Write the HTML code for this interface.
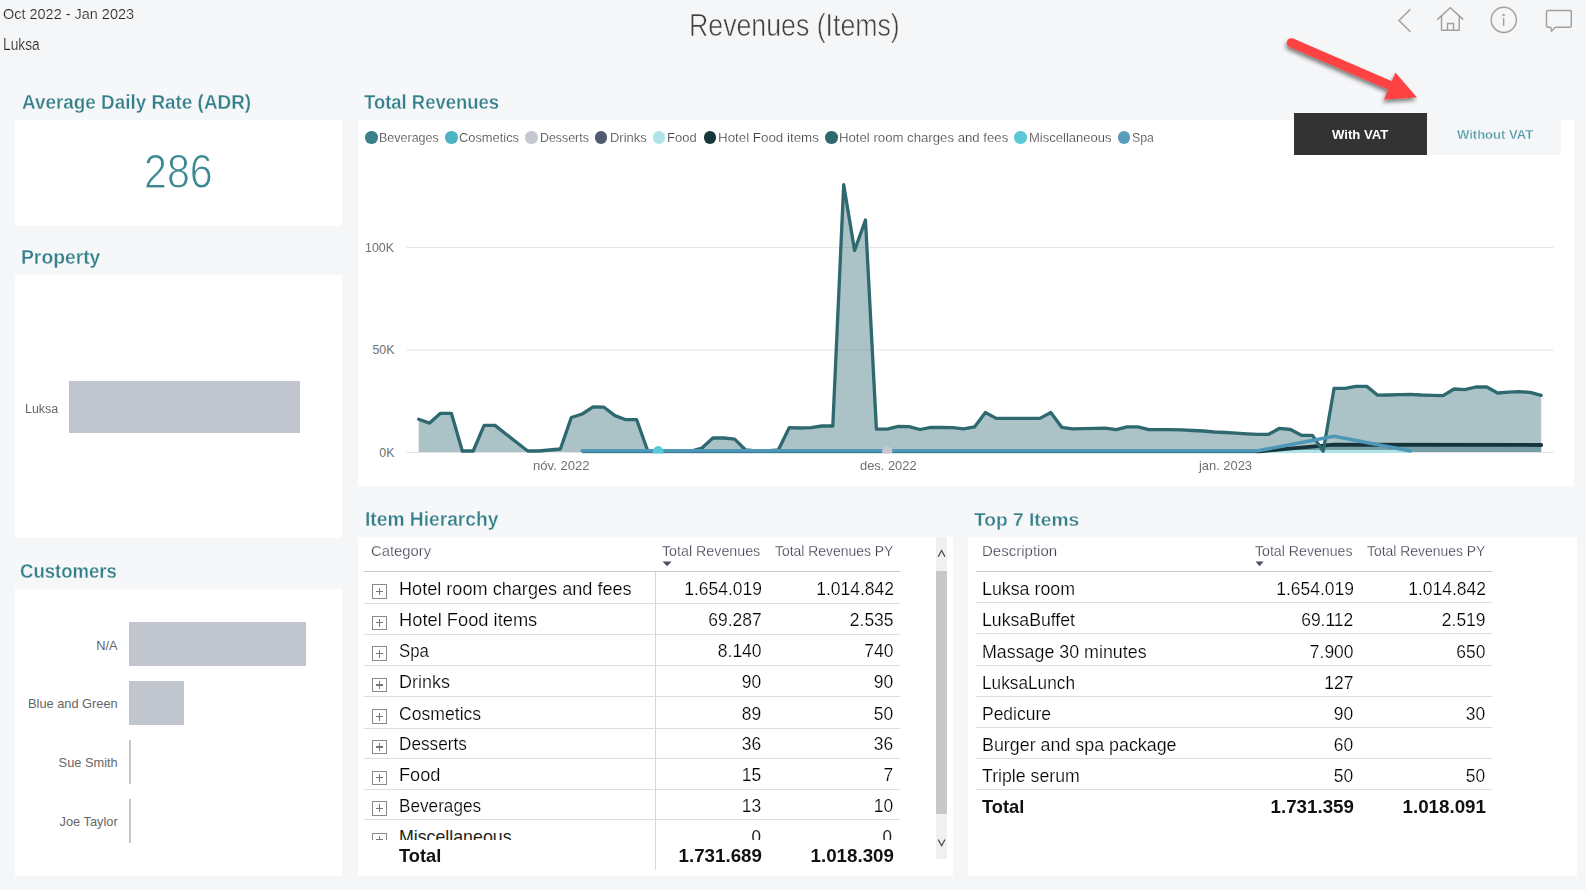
<!DOCTYPE html>
<html><head><meta charset="utf-8"><style>
*{margin:0;padding:0;box-sizing:border-box}
html,body{width:1586px;height:890px;overflow:hidden;background:#f5f6f8;font-family:"Liberation Sans", sans-serif;}
.a{position:absolute;white-space:nowrap}
.card{position:absolute;background:#fff}
.hdr{position:absolute;background:#f6f7f9}
.dot{position:absolute;width:12.5px;height:12.5px;border-radius:50%;top:131.2px}
.hl{position:absolute;height:1px;background:#dcdde2}
.pb{position:absolute;width:14.5px;height:14.5px;border:1.3px solid #8a8a8a;background:#fff}
.pb:before{content:"";position:absolute;left:2.6px;top:5.8px;width:7.5px;height:1.1px;background:#777}
.pb:after{content:"";position:absolute;left:5.8px;top:2.4px;width:1.1px;height:7.8px;background:#777}
.bar{position:absolute;background:#c1c5ce}
</style></head><body>

<!-- top icons -->
<svg class="a" style="left:1390px;top:0" width="196" height="40" viewBox="1390 0 196 40" fill="none" stroke="#a0a0a0" stroke-width="1.45">
<polyline points="1410.4,9.3 1399,20.4 1410.4,31.7"/>
<polyline points="1437.3,19.6 1450.3,7.8 1463.3,19.6"/>
<polyline points="1441.5,15.8 1441.5,30.2 1459.2,30.2 1459.2,15.8" stroke-linejoin="round"/>
<polyline points="1447.5,30.2 1447.5,23.4 1453.5,23.4 1453.5,30.2"/>
<circle cx="1503.8" cy="19.8" r="12.6"/>
<line x1="1503.6" y1="18" x2="1503.6" y2="26"/>
<circle cx="1503.6" cy="15" r="0.5" fill="#a0a0a0"/>
<path d="M1548,10.5 H1570 Q1571.3,10.5 1571.3,12 V25.8 Q1571.3,27.3 1570,27.3 H1555.3 L1551.5,31.2 L1550.8,27.3 H1548 Q1546.5,27.3 1546.5,25.8 V12 Q1546.5,10.5 1548,10.5 Z" stroke-linejoin="round"/>
</svg>

<!-- ADR card -->
<div class="hdr" style="left:15px;top:87px;width:327px;height:33px"></div>
<div class="card" style="left:15px;top:120px;width:327px;height:106px"></div>

<!-- Property card -->
<div class="hdr" style="left:14.5px;top:242px;width:327.5px;height:33px"></div>
<div class="card" style="left:15px;top:275px;width:327px;height:262.5px"></div>
<div class="bar" style="left:69.2px;top:380.8px;width:231.1px;height:52.1px"></div>

<!-- Customers card -->
<div class="hdr" style="left:15px;top:555px;width:327px;height:34px"></div>
<div class="card" style="left:15px;top:589px;width:327px;height:286.5px"></div>
<div class="bar" style="left:128.9px;top:621.8px;width:177.5px;height:44.5px"></div>
<div class="bar" style="left:128.9px;top:680.9px;width:55.3px;height:44.1px"></div>
<div class="bar" style="left:128.9px;top:739.5px;width:2.2px;height:44.5px"></div>
<div class="bar" style="left:128.9px;top:798.5px;width:2.2px;height:44.1px"></div>

<!-- Total revenues card -->
<div class="hdr" style="left:358px;top:87px;width:1216px;height:33px"></div>
<div class="card" style="left:358px;top:120px;width:1216px;height:366px"></div>
<div class="dot" style="left:365.0px;background:#3a7f8a"></div>
<div class="dot" style="left:445.4px;background:#4ab3c4"></div>
<div class="dot" style="left:525.4px;background:#c5c8d0"></div>
<div class="dot" style="left:594.9px;background:#4f5a6e"></div>
<div class="dot" style="left:652.9px;background:#aee3e8"></div>
<div class="dot" style="left:703.9px;background:#16363b"></div>
<div class="dot" style="left:825.0px;background:#2e6970"></div>
<div class="dot" style="left:1014.0px;background:#5bc8d5"></div>
<div class="dot" style="left:1117.9px;background:#5a9cbc"></div>

<svg class="a" style="left:0;top:0" width="1586" height="890" viewBox="0 0 1586 890">
<g stroke="#e4e4e4" stroke-width="1">
<line x1="406.5" y1="247.5" x2="1553.5" y2="247.5"/>
<line x1="406.5" y1="350" x2="1553.5" y2="350"/>
<line x1="406.5" y1="452.5" x2="1553.5" y2="452.5"/>
</g>
<path d="M418.7,452.0 L418.7,419.3 429.6,423.1 440.5,413.3 451.4,413.3 462.3,451.0 473.2,451.0 484.1,425.4 495.0,425.4 505.9,434.0 516.8,442.5 527.7,451.0 538.6,451.0 549.5,450.0 560.4,449.0 571.3,417.5 582.2,414.0 593.1,406.9 604.0,407.2 614.9,415.6 625.8,419.7 636.7,419.7 647.6,450.5 658.5,451.0 669.4,451.0 680.3,451.0 691.1,451.0 702.0,448.0 712.9,438.0 723.8,438.0 734.7,439.2 745.6,450.0 756.5,451.0 767.4,451.0 778.3,450.0 789.2,427.7 800.1,428.0 811.0,427.7 821.9,426.0 832.8,426.0 843.7,184.7 854.6,250.4 865.5,220.0 876.4,429.2 887.3,429.2 898.2,426.3 909.1,426.7 920.0,429.5 930.9,427.3 941.8,427.5 952.7,427.7 963.6,428.8 974.5,426.9 985.4,412.5 996.3,418.4 1007.2,418.4 1018.1,418.4 1029.0,418.4 1039.9,418.4 1050.8,412.5 1061.7,427.3 1072.6,428.8 1083.5,428.6 1094.4,428.4 1105.3,428.2 1116.2,429.7 1127.1,426.9 1138.0,426.9 1148.9,429.6 1159.8,429.6 1170.7,429.6 1181.6,429.8 1192.5,430.5 1203.4,431.0 1214.3,432.0 1225.2,432.5 1236.0,433.2 1246.9,433.8 1257.8,434.3 1268.7,434.3 1279.6,428.3 1290.5,429.5 1301.4,435.3 1312.3,435.3 1323.2,451.2 1334.1,388.3 1345.0,388.3 1355.9,386.4 1366.8,386.4 1377.7,395.2 1388.6,395.0 1399.5,394.6 1410.4,394.4 1421.3,395.0 1432.2,395.3 1443.1,395.7 1454.0,389.0 1464.9,389.7 1475.8,387.0 1486.7,387.0 1497.6,393.0 1508.5,392.1 1519.4,391.7 1530.3,392.4 1541.2,395.3 L1541.2,452.0 Z" fill="#2e6970" fill-opacity="0.4"/>
<path d="M1257.8,452.0 L1257.8,451.5 1334.1,444.6 1541.2,445 L1541.2,452.0 Z" fill="#1f6478" fill-opacity="0.38"/>
<polyline points="1257.8,451.6 1410.4,451.6" fill="none" stroke="#aee3e8" stroke-width="3"/>
<polyline points="582.2,452.3 1257.8,452.3" fill="none" stroke="#1f5a68" stroke-width="2"/>
<polyline points="1257.8,451.5 1334.1,444.6 1541.2,445" fill="none" stroke="#15353a" stroke-width="3.8" stroke-linejoin="round" stroke-linecap="round"/>
<polyline points="418.7,419.3 429.6,423.1 440.5,413.3 451.4,413.3 462.3,451.0 473.2,451.0 484.1,425.4 495.0,425.4 505.9,434.0 516.8,442.5 527.7,451.0 538.6,451.0 549.5,450.0 560.4,449.0 571.3,417.5 582.2,414.0 593.1,406.9 604.0,407.2 614.9,415.6 625.8,419.7 636.7,419.7 647.6,450.5 658.5,451.0 669.4,451.0 680.3,451.0 691.1,451.0 702.0,448.0 712.9,438.0 723.8,438.0 734.7,439.2 745.6,450.0 756.5,451.0 767.4,451.0 778.3,450.0 789.2,427.7 800.1,428.0 811.0,427.7 821.9,426.0 832.8,426.0 843.7,184.7 854.6,250.4 865.5,220.0 876.4,429.2 887.3,429.2 898.2,426.3 909.1,426.7 920.0,429.5 930.9,427.3 941.8,427.5 952.7,427.7 963.6,428.8 974.5,426.9 985.4,412.5 996.3,418.4 1007.2,418.4 1018.1,418.4 1029.0,418.4 1039.9,418.4 1050.8,412.5 1061.7,427.3 1072.6,428.8 1083.5,428.6 1094.4,428.4 1105.3,428.2 1116.2,429.7 1127.1,426.9 1138.0,426.9 1148.9,429.6 1159.8,429.6 1170.7,429.6 1181.6,429.8 1192.5,430.5 1203.4,431.0 1214.3,432.0 1225.2,432.5 1236.0,433.2 1246.9,433.8 1257.8,434.3 1268.7,434.3 1279.6,428.3 1290.5,429.5 1301.4,435.3 1312.3,435.3 1323.2,451.2 1334.1,388.3 1345.0,388.3 1355.9,386.4 1366.8,386.4 1377.7,395.2 1388.6,395.0 1399.5,394.6 1410.4,394.4 1421.3,395.0 1432.2,395.3 1443.1,395.7 1454.0,389.0 1464.9,389.7 1475.8,387.0 1486.7,387.0 1497.6,393.0 1508.5,392.1 1519.4,391.7 1530.3,392.4 1541.2,395.3" fill="none" stroke="#2e6970" stroke-width="3.3" stroke-linejoin="round" stroke-linecap="round"/>
<polyline points="582.2,450.8 1257.8,450.8 1334.1,436.3 1410.4,451" fill="none" stroke="#4e97b8" stroke-width="3.6" stroke-linejoin="round" stroke-linecap="round"/>
<circle cx="658.2" cy="451.5" r="5.4" fill="#5bc8d5"/>
<circle cx="887.2" cy="451.5" r="5.2" fill="#c5c8d0"/>
<rect x="358" y="453.6" width="1216" height="10" fill="#fff"/>
</svg>

<!-- VAT buttons -->
<div class="a" style="left:1294px;top:113px;width:133px;height:41.5px;background:#333"></div>
<div class="a" style="left:1427px;top:113px;width:134px;height:41.5px;background:#f5f6f8"></div>

<!-- arrow -->
<svg class="a" style="left:1260px;top:20px" width="180" height="100" viewBox="1260 20 180 100">
<defs><filter id="sh" x="-20%" y="-20%" width="140%" height="160%"><feGaussianBlur in="SourceAlpha" stdDeviation="2"/><feOffset dx="-1.5" dy="3"/><feComponentTransfer><feFuncA type="linear" slope="0.5"/></feComponentTransfer><feMerge><feMergeNode/><feMergeNode in="SourceGraphic"/></feMerge></filter></defs>
<g filter="url(#sh)">
<line x1="1291.3" y1="42.8" x2="1396" y2="88" stroke="#fc4343" stroke-width="9.2" stroke-linecap="round"/>
<polygon points="1384,99.5 1395.4,72.5 1417,97.6" fill="#fc4343"/>
</g>
</svg>

<!-- Item hierarchy card -->
<div class="hdr" style="left:358px;top:504px;width:595px;height:33px"></div>
<div class="card" style="left:358px;top:537px;width:595px;height:338.5px"></div>
<svg class="a" style="left:662px;top:561px" width="12" height="7"><polygon points="0.6,0.6 9.6,0.6 5.1,5.3" fill="#4a5060"/></svg>
<div class="hl" style="left:364px;top:571px;width:536px;background:#c8cad1"></div>
<div class="a" style="left:655px;top:571.5px;width:1px;height:298.5px;background:#d6d7dc"></div>
<div class="pb" style="left:372px;top:584.2px"></div><div class="hl" style="left:364px;top:602.5px;width:536px"></div>
<div class="pb" style="left:372px;top:615.5px"></div><div class="hl" style="left:364px;top:633.8px;width:536px"></div>
<div class="pb" style="left:372px;top:646.4px"></div><div class="hl" style="left:364px;top:664.7px;width:536px"></div>
<div class="pb" style="left:372px;top:677.7px"></div><div class="hl" style="left:364px;top:696.0px;width:536px"></div>
<div class="pb" style="left:372px;top:709.4px"></div><div class="hl" style="left:364px;top:727.7px;width:536px"></div>
<div class="pb" style="left:372px;top:739.7px"></div><div class="hl" style="left:364px;top:758.0px;width:536px"></div>
<div class="pb" style="left:372px;top:770.5px"></div><div class="hl" style="left:364px;top:788.8px;width:536px"></div>
<div class="pb" style="left:372px;top:801.1px"></div><div class="hl" style="left:364px;top:819.4px;width:536px"></div>

<div class="a" style="left:358px;top:820px;width:576px;height:19.5px;overflow:hidden">
<div class="pb" style="left:14px;top:12.5px"></div>
<div class="a" style="left:40.9px;top:8.83px;font-size:17.8px;line-height:17.8px;color:#201f1e">Miscellaneous</div>
<div class="a" style="right:173.60px;top:8.83px;font-size:17.8px;line-height:17.8px;color:#201f1e;transform:scaleX(0.96);transform-origin:100% 0">0</div>
<div class="a" style="right:41.80px;top:8.83px;font-size:17.8px;line-height:17.8px;color:#201f1e;transform:scaleX(0.96);transform-origin:100% 0">0</div>
</div>
<!-- scrollbar -->
<div class="a" style="left:936.2px;top:537px;width:10.5px;height:321.5px;background:#f0f0f0"></div>
<div class="a" style="left:936.2px;top:571.4px;width:10.5px;height:242.5px;background:#c8c8c8"></div>
<svg class="a" style="left:936px;top:549px" width="11" height="10"><polyline points="2.2,7.7 5.6,1.4 9,7.7" fill="none" stroke="#444" stroke-width="1.2"/></svg>
<svg class="a" style="left:936px;top:838px" width="11" height="10"><polyline points="2.2,1.5 5.6,7.8 9,1.5" fill="none" stroke="#444" stroke-width="1.2"/></svg>

<!-- Top 7 card -->
<div class="hdr" style="left:968px;top:504px;width:609px;height:33px"></div>
<div class="card" style="left:968px;top:537px;width:609px;height:338.5px"></div>
<svg class="a" style="left:1255px;top:561px" width="12" height="7"><polygon points="0.6,0.6 8.6,0.6 4.6,5.3" fill="#4a5060"/></svg>
<div class="hl" style="left:976px;top:571px;width:516px;background:#c8cad1"></div>
<div class="hl" style="left:976px;top:602.1px;width:516px"></div>
<div class="hl" style="left:976px;top:633.0px;width:516px"></div>
<div class="hl" style="left:976px;top:664.6px;width:516px"></div>
<div class="hl" style="left:976px;top:695.8px;width:516px"></div>
<div class="hl" style="left:976px;top:726.8px;width:516px"></div>
<div class="hl" style="left:976px;top:758.1px;width:516px"></div>
<div class="hl" style="left:976px;top:789.0px;width:516px"></div>

<div class="a" style="left:2.99px;transform-origin:0 0;top:6.08px;font-size:15.14px;line-height:15.14px;font-weight:normal;color:#252423;transform:scaleX(0.9559);-webkit-text-stroke:0.2px #f5f6f8;">Oct 2022 - Jan 2023</div>
<div class="a" style="left:3.02px;transform-origin:0 0;top:35.93px;font-size:16.39px;line-height:16.39px;font-weight:normal;color:#252423;transform:scaleX(0.8412);-webkit-text-stroke:0.2px #f5f6f8;">Luksa</div>
<div class="a" style="left:688.56px;transform-origin:0 0;top:9.61px;font-size:31.53px;line-height:31.53px;font-weight:normal;color:#404040;transform:scaleX(0.8474);-webkit-text-stroke:0.6px #f5f6f8;">Revenues (Items)</div>
<div class="a" style="left:21.94px;transform-origin:0 0;top:93.09px;font-size:19.86px;line-height:19.86px;font-weight:bold;color:#34808a;transform:scaleX(0.9508);-webkit-text-stroke:0.3px #f6f7f9;">Average Daily Rate (ADR)</div>
<div class="a" style="left:144.46px;transform-origin:0 0;top:148.19px;font-size:47.5px;line-height:47.5px;font-weight:normal;color:#3a8892;transform:scaleX(0.8678);-webkit-text-stroke:1.0px #fff;">286</div>
<div class="a" style="left:20.52px;transform-origin:0 0;top:247.13px;font-size:20.28px;line-height:20.28px;font-weight:bold;color:#34808a;transform:scaleX(0.9521);-webkit-text-stroke:0.3px #f6f7f9;">Property</div>
<div class="a" style="left:20.15px;transform-origin:0 0;top:561.27px;font-size:20.0px;line-height:20.0px;font-weight:bold;color:#34808a;transform:scaleX(0.9274);-webkit-text-stroke:0.3px #f6f7f9;">Customers</div>
<div class="a" style="left:364.25px;transform-origin:0 0;top:93.24px;font-size:19.44px;line-height:19.44px;font-weight:bold;color:#34808a;transform:scaleX(0.9491);-webkit-text-stroke:0.3px #f6f7f9;">Total Revenues</div>
<div class="a" style="left:364.53px;transform-origin:0 0;top:509.53px;font-size:19.58px;line-height:19.58px;font-weight:bold;color:#34808a;transform:scaleX(0.9810);-webkit-text-stroke:0.3px #f6f7f9;">Item Hierarchy</div>
<div class="a" style="left:974.13px;transform-origin:0 0;top:509.99px;font-size:19.03px;line-height:19.03px;font-weight:bold;color:#34808a;transform:scaleX(1.0084);-webkit-text-stroke:0.3px #f6f7f9;">Top 7 Items</div>
<div class="a" style="left:379.36px;transform-origin:0 0;top:130.88px;font-size:13.61px;line-height:13.61px;font-weight:normal;color:#444;transform:scaleX(0.9185);-webkit-text-stroke:0.2px #fff;">Beverages</div>
<div class="a" style="left:459.35px;transform-origin:0 0;top:130.88px;font-size:13.61px;line-height:13.61px;font-weight:normal;color:#444;transform:scaleX(0.9444);-webkit-text-stroke:0.2px #fff;">Cosmetics</div>
<div class="a" style="left:540.17px;transform-origin:0 0;top:130.88px;font-size:13.61px;line-height:13.61px;font-weight:normal;color:#444;transform:scaleX(0.9099);-webkit-text-stroke:0.2px #fff;">Desserts</div>
<div class="a" style="left:609.85px;transform-origin:0 0;top:130.88px;font-size:13.61px;line-height:13.61px;font-weight:normal;color:#444;transform:scaleX(0.9519);-webkit-text-stroke:0.2px #fff;">Drinks</div>
<div class="a" style="left:667.35px;transform-origin:0 0;top:130.88px;font-size:13.61px;line-height:13.61px;font-weight:normal;color:#444;transform:scaleX(0.9542);-webkit-text-stroke:0.2px #fff;">Food</div>
<div class="a" style="left:717.93px;transform-origin:0 0;top:130.88px;font-size:13.61px;line-height:13.61px;font-weight:normal;color:#444;transform:scaleX(0.9802);-webkit-text-stroke:0.2px #fff;">Hotel Food items</div>
<div class="a" style="left:839.24px;transform-origin:0 0;top:130.88px;font-size:13.61px;line-height:13.61px;font-weight:normal;color:#444;transform:scaleX(0.9684);-webkit-text-stroke:0.2px #fff;">Hotel room charges and fees</div>
<div class="a" style="left:1029.04px;transform-origin:0 0;top:130.88px;font-size:13.61px;line-height:13.61px;font-weight:normal;color:#444;transform:scaleX(0.9567);-webkit-text-stroke:0.2px #fff;">Miscellaneous</div>
<div class="a" style="left:1131.57px;transform-origin:0 0;top:130.88px;font-size:13.61px;line-height:13.61px;font-weight:normal;color:#444;transform:scaleX(0.9069);-webkit-text-stroke:0.2px #fff;">Spa</div>
<div class="a" style="left:365.47px;transform-origin:0 0;top:241.94px;font-size:12.36px;line-height:12.36px;font-weight:normal;color:#707070;transform:scaleX(1.0050);">100K</div>
<div class="a" style="right:1191.52px;transform-origin:100% 0;top:343.90px;font-size:12.4px;line-height:12.4px;font-weight:normal;color:#707070;transform:scaleX(1.0000);">50K</div>
<div class="a" style="right:1191.52px;transform-origin:100% 0;top:446.90px;font-size:12.4px;line-height:12.4px;font-weight:normal;color:#707070;transform:scaleX(1.0000);">0K</div>
<div class="a" style="left:532.94px;transform-origin:0 0;top:460.24px;font-size:12.36px;line-height:12.36px;font-weight:normal;color:#707070;transform:scaleX(1.0608);">nóv. 2022</div>
<div class="a" style="left:860.05px;transform-origin:0 0;top:460.20px;font-size:12.4px;line-height:12.4px;font-weight:normal;color:#707070;transform:scaleX(1.0400);">des. 2022</div>
<div class="a" style="left:1199.15px;transform-origin:0 0;top:460.20px;font-size:12.4px;line-height:12.4px;font-weight:normal;color:#707070;transform:scaleX(1.0400);">jan. 2023</div>
<div class="a" style="left:24.76px;transform-origin:0 0;top:402.82px;font-size:12.5px;line-height:12.5px;font-weight:normal;color:#666;transform:scaleX(0.9974);">Luksa</div>
<div class="a" style="right:1468.35px;transform-origin:100% 0;top:640.16px;font-size:12.8px;line-height:12.8px;font-weight:normal;color:#666;transform:scaleX(1.0000);">N/A</div>
<div class="a" style="right:1468.35px;transform-origin:100% 0;top:698.06px;font-size:12.8px;line-height:12.8px;font-weight:normal;color:#666;transform:scaleX(1.0000);">Blue and Green</div>
<div class="a" style="right:1468.35px;transform-origin:100% 0;top:756.86px;font-size:12.8px;line-height:12.8px;font-weight:normal;color:#666;transform:scaleX(1.0000);">Sue Smith</div>
<div class="a" style="right:1468.35px;transform-origin:100% 0;top:815.66px;font-size:12.8px;line-height:12.8px;font-weight:normal;color:#666;transform:scaleX(1.0000);">Joe Taylor</div>
<div class="a" style="left:1332.24px;transform-origin:0 0;top:129.36px;font-size:12.92px;line-height:12.92px;font-weight:bold;color:#fff;transform:scaleX(1.0179);">With VAT</div>
<div class="a" style="left:1456.84px;transform-origin:0 0;top:129.36px;font-size:12.92px;line-height:12.92px;font-weight:bold;color:#4a9aa4;transform:scaleX(1.0096);-webkit-text-stroke:0.3px #f5f6f8;">Without VAT</div>
<div class="a" style="left:370.78px;transform-origin:0 0;top:543.08px;font-size:15.14px;line-height:15.14px;font-weight:normal;color:#3c4250;transform:scaleX(0.9782);-webkit-text-stroke:0.25px #fff;">Category</div>
<div class="a" style="left:662.40px;transform-origin:0 0;top:543.20px;font-size:15.0px;line-height:15.0px;font-weight:normal;color:#3c4250;transform:scaleX(0.9496);-webkit-text-stroke:0.25px #fff;">Total Revenues</div>
<div class="a" style="left:774.71px;transform-origin:0 0;top:543.20px;font-size:15.0px;line-height:15.0px;font-weight:normal;color:#3c4250;transform:scaleX(0.9279);-webkit-text-stroke:0.25px #fff;">Total Revenues PY</div>
<div class="a" style="left:982.07px;transform-origin:0 0;top:543.08px;font-size:15.14px;line-height:15.14px;font-weight:normal;color:#3c4250;transform:scaleX(0.9933);-webkit-text-stroke:0.25px #fff;">Description</div>
<div class="a" style="left:1255.31px;transform-origin:0 0;top:543.20px;font-size:15.0px;line-height:15.0px;font-weight:normal;color:#3c4250;transform:scaleX(0.9428);-webkit-text-stroke:0.25px #fff;">Total Revenues</div>
<div class="a" style="left:1366.91px;transform-origin:0 0;top:543.20px;font-size:15.0px;line-height:15.0px;font-weight:normal;color:#3c4250;transform:scaleX(0.9279);-webkit-text-stroke:0.25px #fff;">Total Revenues PY</div>
<div class="a" style="left:399.37px;transform-origin:0 0;top:579.89px;font-size:18.2px;line-height:18.2px;font-weight:normal;color:#000;transform:scaleX(0.9962);-webkit-text-stroke:0.22px #fff;">Hotel room charges and fees</div>
<div class="a" style="right:824.39px;transform-origin:100% 0;top:579.89px;font-size:18.2px;line-height:18.2px;font-weight:normal;color:#000;transform:scaleX(0.9600);-webkit-text-stroke:0.22px #fff;">1.654.019</div>
<div class="a" style="right:692.59px;transform-origin:100% 0;top:579.89px;font-size:18.2px;line-height:18.2px;font-weight:normal;color:#000;transform:scaleX(0.9600);-webkit-text-stroke:0.22px #fff;">1.014.842</div>
<div class="a" style="left:399.36px;transform-origin:0 0;top:611.19px;font-size:18.2px;line-height:18.2px;font-weight:normal;color:#000;transform:scaleX(1.0058);-webkit-text-stroke:0.22px #fff;">Hotel Food items</div>
<div class="a" style="right:824.39px;transform-origin:100% 0;top:611.19px;font-size:18.2px;line-height:18.2px;font-weight:normal;color:#000;transform:scaleX(0.9600);-webkit-text-stroke:0.22px #fff;">69.287</div>
<div class="a" style="right:692.59px;transform-origin:100% 0;top:611.19px;font-size:18.2px;line-height:18.2px;font-weight:normal;color:#000;transform:scaleX(0.9600);-webkit-text-stroke:0.22px #fff;">2.535</div>
<div class="a" style="left:399.41px;transform-origin:0 0;top:642.09px;font-size:18.2px;line-height:18.2px;font-weight:normal;color:#000;transform:scaleX(0.9228);-webkit-text-stroke:0.22px #fff;">Spa</div>
<div class="a" style="right:824.39px;transform-origin:100% 0;top:642.09px;font-size:18.2px;line-height:18.2px;font-weight:normal;color:#000;transform:scaleX(0.9600);-webkit-text-stroke:0.22px #fff;">8.140</div>
<div class="a" style="right:692.59px;transform-origin:100% 0;top:642.09px;font-size:18.2px;line-height:18.2px;font-weight:normal;color:#000;transform:scaleX(0.9600);-webkit-text-stroke:0.22px #fff;">740</div>
<div class="a" style="left:399.37px;transform-origin:0 0;top:673.39px;font-size:18.2px;line-height:18.2px;font-weight:normal;color:#000;transform:scaleX(0.9886);-webkit-text-stroke:0.22px #fff;">Drinks</div>
<div class="a" style="right:824.39px;transform-origin:100% 0;top:673.39px;font-size:18.2px;line-height:18.2px;font-weight:normal;color:#000;transform:scaleX(0.9600);-webkit-text-stroke:0.22px #fff;">90</div>
<div class="a" style="right:692.59px;transform-origin:100% 0;top:673.39px;font-size:18.2px;line-height:18.2px;font-weight:normal;color:#000;transform:scaleX(0.9600);-webkit-text-stroke:0.22px #fff;">90</div>
<div class="a" style="left:399.38px;transform-origin:0 0;top:705.09px;font-size:18.2px;line-height:18.2px;font-weight:normal;color:#000;transform:scaleX(0.9675);-webkit-text-stroke:0.22px #fff;">Cosmetics</div>
<div class="a" style="right:824.39px;transform-origin:100% 0;top:705.09px;font-size:18.2px;line-height:18.2px;font-weight:normal;color:#000;transform:scaleX(0.9600);-webkit-text-stroke:0.22px #fff;">89</div>
<div class="a" style="right:692.59px;transform-origin:100% 0;top:705.09px;font-size:18.2px;line-height:18.2px;font-weight:normal;color:#000;transform:scaleX(0.9600);-webkit-text-stroke:0.22px #fff;">50</div>
<div class="a" style="left:399.40px;transform-origin:0 0;top:735.39px;font-size:18.2px;line-height:18.2px;font-weight:normal;color:#000;transform:scaleX(0.9448);-webkit-text-stroke:0.22px #fff;">Desserts</div>
<div class="a" style="right:824.39px;transform-origin:100% 0;top:735.39px;font-size:18.2px;line-height:18.2px;font-weight:normal;color:#000;transform:scaleX(0.9600);-webkit-text-stroke:0.22px #fff;">36</div>
<div class="a" style="right:692.59px;transform-origin:100% 0;top:735.39px;font-size:18.2px;line-height:18.2px;font-weight:normal;color:#000;transform:scaleX(0.9600);-webkit-text-stroke:0.22px #fff;">36</div>
<div class="a" style="left:399.36px;transform-origin:0 0;top:766.19px;font-size:18.2px;line-height:18.2px;font-weight:normal;color:#000;transform:scaleX(1.0001);-webkit-text-stroke:0.22px #fff;">Food</div>
<div class="a" style="right:824.39px;transform-origin:100% 0;top:766.19px;font-size:18.2px;line-height:18.2px;font-weight:normal;color:#000;transform:scaleX(0.9600);-webkit-text-stroke:0.22px #fff;">15</div>
<div class="a" style="right:692.59px;transform-origin:100% 0;top:766.19px;font-size:18.2px;line-height:18.2px;font-weight:normal;color:#000;transform:scaleX(0.9600);-webkit-text-stroke:0.22px #fff;">7</div>
<div class="a" style="left:399.40px;transform-origin:0 0;top:796.79px;font-size:18.2px;line-height:18.2px;font-weight:normal;color:#000;transform:scaleX(0.9442);-webkit-text-stroke:0.22px #fff;">Beverages</div>
<div class="a" style="right:824.39px;transform-origin:100% 0;top:796.79px;font-size:18.2px;line-height:18.2px;font-weight:normal;color:#000;transform:scaleX(0.9600);-webkit-text-stroke:0.22px #fff;">13</div>
<div class="a" style="right:692.59px;transform-origin:100% 0;top:796.79px;font-size:18.2px;line-height:18.2px;font-weight:normal;color:#000;transform:scaleX(0.9600);-webkit-text-stroke:0.22px #fff;">10</div>
<div class="a" style="left:399.36px;transform-origin:0 0;top:846.59px;font-size:18.2px;line-height:18.2px;font-weight:bold;color:#111;transform:scaleX(1.0044);">Total</div>
<div class="a" style="right:824.04px;transform-origin:100% 0;top:846.59px;font-size:18.2px;line-height:18.2px;font-weight:bold;color:#111;transform:scaleX(1.0300);">1.731.689</div>
<div class="a" style="right:692.04px;transform-origin:100% 0;top:846.59px;font-size:18.2px;line-height:18.2px;font-weight:bold;color:#111;transform:scaleX(1.0300);">1.018.309</div>
<div class="a" style="left:981.98px;transform-origin:0 0;top:580.49px;font-size:18.2px;line-height:18.2px;font-weight:normal;color:#000;transform:scaleX(0.9791);-webkit-text-stroke:0.22px #fff;">Luksa room</div>
<div class="a" style="right:232.39px;transform-origin:100% 0;top:580.49px;font-size:18.2px;line-height:18.2px;font-weight:normal;color:#000;transform:scaleX(0.9600);-webkit-text-stroke:0.22px #fff;">1.654.019</div>
<div class="a" style="right:100.49px;transform-origin:100% 0;top:580.49px;font-size:18.2px;line-height:18.2px;font-weight:normal;color:#000;transform:scaleX(0.9600);-webkit-text-stroke:0.22px #fff;">1.014.842</div>
<div class="a" style="left:981.98px;transform-origin:0 0;top:611.39px;font-size:18.2px;line-height:18.2px;font-weight:normal;color:#000;transform:scaleX(0.9718);-webkit-text-stroke:0.22px #fff;">LuksaBuffet</div>
<div class="a" style="right:232.39px;transform-origin:100% 0;top:611.39px;font-size:18.2px;line-height:18.2px;font-weight:normal;color:#000;transform:scaleX(0.9600);-webkit-text-stroke:0.22px #fff;">69.112</div>
<div class="a" style="right:100.49px;transform-origin:100% 0;top:611.39px;font-size:18.2px;line-height:18.2px;font-weight:normal;color:#000;transform:scaleX(0.9600);-webkit-text-stroke:0.22px #fff;">2.519</div>
<div class="a" style="left:981.98px;transform-origin:0 0;top:642.99px;font-size:18.2px;line-height:18.2px;font-weight:normal;color:#000;transform:scaleX(0.9805);-webkit-text-stroke:0.22px #fff;">Massage 30 minutes</div>
<div class="a" style="right:232.39px;transform-origin:100% 0;top:642.99px;font-size:18.2px;line-height:18.2px;font-weight:normal;color:#000;transform:scaleX(0.9600);-webkit-text-stroke:0.22px #fff;">7.900</div>
<div class="a" style="right:100.49px;transform-origin:100% 0;top:642.99px;font-size:18.2px;line-height:18.2px;font-weight:normal;color:#000;transform:scaleX(0.9600);-webkit-text-stroke:0.22px #fff;">650</div>
<div class="a" style="left:982.00px;transform-origin:0 0;top:674.19px;font-size:18.2px;line-height:18.2px;font-weight:normal;color:#000;transform:scaleX(0.9482);-webkit-text-stroke:0.22px #fff;">LuksaLunch</div>
<div class="a" style="right:232.39px;transform-origin:100% 0;top:674.19px;font-size:18.2px;line-height:18.2px;font-weight:normal;color:#000;transform:scaleX(0.9600);-webkit-text-stroke:0.22px #fff;">127</div>
<div class="a" style="left:981.99px;transform-origin:0 0;top:705.19px;font-size:18.2px;line-height:18.2px;font-weight:normal;color:#000;transform:scaleX(0.9600);-webkit-text-stroke:0.22px #fff;">Pedicure</div>
<div class="a" style="right:232.39px;transform-origin:100% 0;top:705.19px;font-size:18.2px;line-height:18.2px;font-weight:normal;color:#000;transform:scaleX(0.9600);-webkit-text-stroke:0.22px #fff;">90</div>
<div class="a" style="right:100.49px;transform-origin:100% 0;top:705.19px;font-size:18.2px;line-height:18.2px;font-weight:normal;color:#000;transform:scaleX(0.9600);-webkit-text-stroke:0.22px #fff;">30</div>
<div class="a" style="left:981.97px;transform-origin:0 0;top:736.49px;font-size:18.2px;line-height:18.2px;font-weight:normal;color:#000;transform:scaleX(0.9816);-webkit-text-stroke:0.22px #fff;">Burger and spa package</div>
<div class="a" style="right:232.39px;transform-origin:100% 0;top:736.49px;font-size:18.2px;line-height:18.2px;font-weight:normal;color:#000;transform:scaleX(0.9600);-webkit-text-stroke:0.22px #fff;">60</div>
<div class="a" style="left:981.98px;transform-origin:0 0;top:767.39px;font-size:18.2px;line-height:18.2px;font-weight:normal;color:#000;transform:scaleX(0.9736);-webkit-text-stroke:0.22px #fff;">Triple serum</div>
<div class="a" style="right:232.39px;transform-origin:100% 0;top:767.39px;font-size:18.2px;line-height:18.2px;font-weight:normal;color:#000;transform:scaleX(0.9600);-webkit-text-stroke:0.22px #fff;">50</div>
<div class="a" style="right:100.49px;transform-origin:100% 0;top:767.39px;font-size:18.2px;line-height:18.2px;font-weight:normal;color:#000;transform:scaleX(0.9600);-webkit-text-stroke:0.22px #fff;">50</div>
<div class="a" style="left:981.96px;transform-origin:0 0;top:797.79px;font-size:18.2px;line-height:18.2px;font-weight:bold;color:#111;transform:scaleX(1.0044);">Total</div>
<div class="a" style="right:232.04px;transform-origin:100% 0;top:797.79px;font-size:18.2px;line-height:18.2px;font-weight:bold;color:#111;transform:scaleX(1.0300);">1.731.359</div>
<div class="a" style="right:100.44px;transform-origin:100% 0;top:797.79px;font-size:18.2px;line-height:18.2px;font-weight:bold;color:#111;transform:scaleX(1.0300);">1.018.091</div>
</body></html>
